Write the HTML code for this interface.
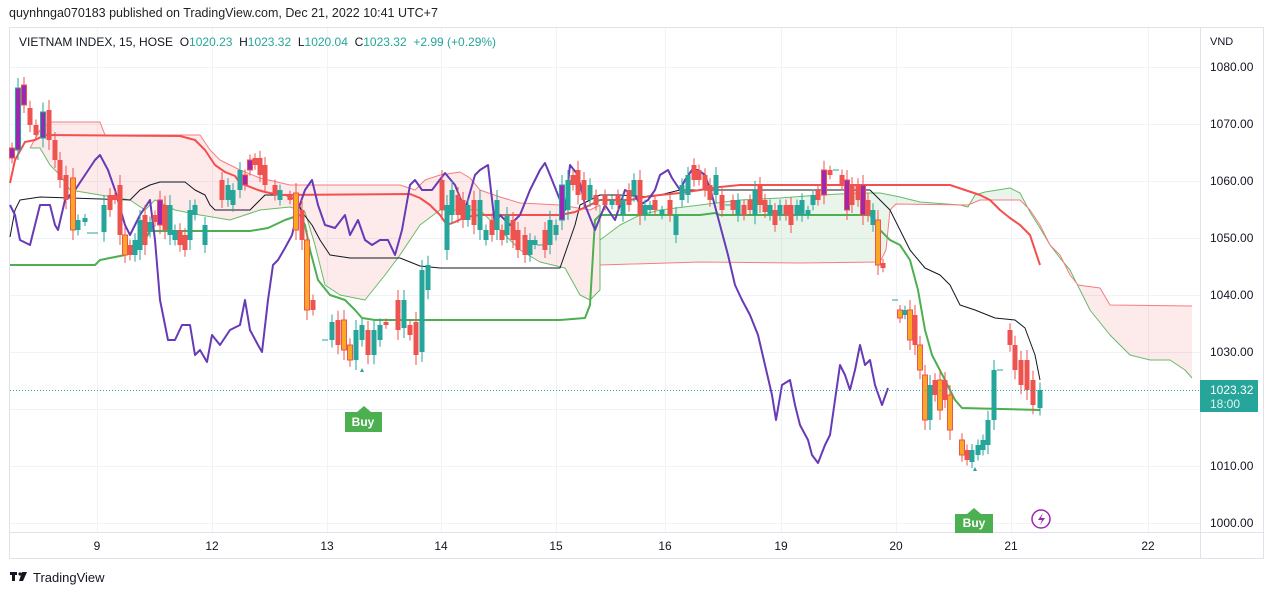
<!DOCTYPE html>
<html><head><meta charset="utf-8"><style>
body{margin:0;background:#fff;font-family:"Liberation Sans",sans-serif;}
.wrap{position:relative;width:1274px;height:595px;overflow:hidden}
.t{position:absolute;font-size:12px;color:#131722}
</style></head><body><div class="wrap">
<div class="t" style="left:9px;top:6px;font-size:12.5px;color:#222">quynhnga070183 published on TradingView.com, Dec 21, 2022 10:41 UTC+7</div>
<svg width="1274" height="595" style="position:absolute;left:0;top:0" id="s">
<rect x="9.5" y="27.5" width="1254" height="531" fill="none" stroke="#e0e3eb"/>
<line x1="1200.5" y1="28" x2="1200.5" y2="558" stroke="#e0e3eb"/>
<line x1="10" y1="532.5" x2="1263" y2="532.5" stroke="#e0e3eb"/>
<g stroke="#f0f3fa" id="grid"></g>
<g id="cloud"></g>
<g id="lines" fill="none"></g>
<g id="cd"></g>
<line x1="10" y1="390.5" x2="1200" y2="390.5" stroke="#26a69a" stroke-dasharray="1,2"/>
<rect x="1200" y="380" width="58" height="32" fill="#26a69a"/>
<text x="1210" y="394" fill="#fff" font-size="12" font-family="Liberation Sans">1023.32</text>
<text x="1210" y="408" fill="#e0f2f1" font-size="12" font-family="Liberation Sans">18:00</text>
<text x="1210" y="45" fill="#131722" font-size="11" font-family="Liberation Sans">VND</text>
<g font-size="12" font-family="Liberation Sans" fill="#131722" id="py"></g>
<g font-size="12" font-family="Liberation Sans" fill="#131722" text-anchor="middle">
<text x="97" y="550">9</text><text x="212" y="550">12</text><text x="327" y="550">13</text><text x="441" y="550">14</text><text x="556" y="550">15</text><text x="665" y="550">16</text><text x="781" y="550">19</text><text x="896" y="550">20</text><text x="1011" y="550">21</text><text x="1148" y="550">22</text></g>
<path d="M345 412h12l7-6 7 6h11v20h-37z" fill="#4caf50"/>
<text x="363" y="426" fill="#fff" font-size="12" font-weight="bold" text-anchor="middle" font-family="Liberation Sans">Buy</text>
<path d="M955 514h12l7-6 7 6h12v19h-38z" fill="#4caf50"/>
<text x="974" y="527" fill="#fff" font-size="12" font-weight="bold" text-anchor="middle" font-family="Liberation Sans">Buy</text>
<circle cx="1041" cy="519" r="9" fill="none" stroke="#9c27b0" stroke-width="1.5"/>
<path d="M1043 513l-5 7h4l-2 5 5-7h-4z" fill="#9c27b0"/>
<path d="M362 368l2 4h-4z M975 467l2 4h-4z" fill="#26a69a"/>
<rect x="10" y="572" width="7" height="3" fill="#131722"/><rect x="12" y="572" width="3" height="9" fill="#131722"/><circle cx="20" cy="574" r="1.6" fill="#131722"/><path d="M22 572h5l-4 9h-4z" fill="#131722"/>
<text x="33" y="582" font-size="13" fill="#131722" font-family="Liberation Sans">TradingView</text>
</svg>
<div class="t" style="left:19px;top:35px;font-size:12px;color:#131722">VIETNAM INDEX, 15, HOSE&nbsp; O<span style="color:#26a69a">1020.23</span>&nbsp; H<span style="color:#26a69a">1023.32</span>&nbsp; L<span style="color:#26a69a">1020.04</span>&nbsp; C<span style="color:#26a69a">1023.32</span>&nbsp; <span style="color:#26a69a">+2.99 (+0.29%)</span></div>
<script>
var NS="http://www.w3.org/2000/svg";
function el(p,t,a){var e=document.createElementNS(NS,t);for(var k in a)e.setAttribute(k,a[k]);document.getElementById(p).appendChild(e);return e}
[97,212,327,441,556,665,781,896,1011,1148].forEach(function(x){el("grid","line",{x1:x+.5,y1:28,x2:x+.5,y2:532})});
var pr=[1080,1070,1060,1050,1040,1030,1020,1010,1000];
pr.forEach(function(p,i){var y=67+i*57;el("grid","line",{x1:10,y1:y+.5,x2:1200,y2:y+.5});if(p!=1020){var t=el("py","text",{x:1210,y:y+4});t.textContent=p.toFixed(2)}});
function pts(a){var s="";for(var i=0;i<a.length;i+=2)s+=a[i]+","+a[i+1]+" ";return s}
function poly(g,a,c,w){el(g,"polyline",{points:pts(a),stroke:c,"stroke-width":w,fill:"none","stroke-linejoin":"round"})}
function area(top,bot,fill){var a=top.slice();for(var i=bot.length-2;i>=0;i-=2){a.push(bot[i],bot[i+1])}el("cloud","polygon",{points:pts(a),fill:fill})}
var rTop=[30,148,40,130,50,122,100,122,105,135,200,135,210,150,220,160,240,170,260,178,290,185,400,185,415,190,425,180,440,175,460,172,470,178,480,190,500,197,520,203,560,205,590,210,600,205];
var gBot=[30,148,40,148,50,165,60,175,70,190,100,195,130,200,145,210,155,200,175,210,200,215,230,220,260,210,290,207,305,212,315,245,325,285,340,295,365,300,385,275,400,255,410,240,420,225,440,210,460,210,480,210,500,230,520,250,540,262,565,268,580,295,590,300,600,290,600,205];
area(rTop,gBot,"rgba(239,83,80,0.12)");
var gA=[600,240,620,225,640,215,660,210,700,205,740,200,780,198,820,195,860,193,880,193,900,197,920,202,960,205,968,207];
var gB=[968,207,975,195,985,192,1010,188,1020,193,1030,212];
var gC=[1030,212,1040,228,1050,245,1060,258,1070,270,1080,290,1090,310,1110,335,1130,355,1150,360,1170,360,1185,370,1192,378];
var rA=[600,265,700,262,800,263,880,262,886,250,890,210,896,204,968,205];
var rB=[968,205,980,200,1020,200,1030,210];
var rC=[1030,210,1040,225,1050,245,1060,255,1070,275,1078,285,1100,288,1110,305,1192,306];
area(gA,rA,"rgba(76,175,80,0.12)");
area(gB,rB,"rgba(76,175,80,0.12)");
area(rC,gC,"rgba(239,83,80,0.12)");
poly("lines",rTop,"#f77c80",1);poly("lines",gBot,"#66bb6a",1);
poly("lines",gA.concat(gB,gC),"#66bb6a",1);poly("lines",rA.concat(rB,rC),"#f77c80",1);
poly("lines",[10,237,15,210,20,200,40,197,130,200,140,190,150,185,160,182,185,182,195,190,205,195,210,205,215,210,250,210,260,200,265,195,285,195,297,200,302,212,312,225,320,240,330,255,350,258,400,258,410,262,420,266,440,268,560,268,575,225,580,205,590,200,600,195,620,195,650,197,660,195,680,190,870,190,880,200,890,210,900,230,910,250,925,268,940,275,950,285,960,305,975,310,995,318,1015,320,1025,328,1035,355,1040,380],"#131722",1);
poly("lines",[10,265,95,265,100,260,125,255,145,240,150,231,250,231,268,228,285,220,300,215,305,225,310,250,318,280,330,295,345,300,355,310,362,318,375,320,560,320,585,318,590,305,595,220,600,215,700,215,715,213,720,215,870,215,880,230,890,240,900,245,910,260,918,290,925,330,932,355,945,380,955,400,962,408,1040,410],"#4caf50",2);
poly("lines",[10,183,15,160,25,142,35,140,45,135,180,136,195,140,205,150,215,165,225,172,235,176,240,183,258,190,265,192,280,195,410,194,420,198,430,205,440,215,447,225,455,222,465,217,480,215,560,215,575,212,590,205,600,200,630,200,650,196,680,193,700,190,720,187,740,185,950,185,965,190,980,195,990,200,1000,210,1010,218,1020,225,1030,235,1040,265],"#f44f4f",2);
poly("lines",[10,205,15,215,20,240,30,245,40,205,50,205,55,225,58,230,65,200,75,190,85,175,95,160,100,155,108,170,115,190,125,225,130,235,140,215,150,200,155,240,160,300,168,340,175,340,182,325,190,325,195,355,200,350,207,362,212,335,220,345,230,330,240,325,245,300,250,330,258,345,262,352,268,300,273,265,278,260,285,248,292,235,298,210,305,190,312,180,318,205,325,225,335,228,345,215,350,235,358,220,365,240,372,245,380,240,388,240,395,255,402,230,410,185,415,180,422,190,432,190,445,173,455,185,465,210,475,175,480,170,488,165,495,225,500,215,510,225,520,215,530,190,540,170,545,163,550,175,560,200,565,210,570,165,578,175,585,205,595,230,605,205,615,220,625,190,635,195,640,205,648,200,655,190,660,175,668,170,672,178,680,190,685,180,692,170,698,170,705,175,712,195,720,225,728,255,735,285,742,300,750,315,758,335,765,365,772,395,776,420,782,385,790,380,795,405,800,425,808,440,812,455,818,463,825,445,830,435,835,400,840,365,845,375,850,390,855,370,860,345,865,365,870,360,875,385,882,405,888,388],"#673ab7",2);
var C={t:["#26a69a","#26a69a"],r:["#ef5350","#ef5350"],p:["#9c27b0","#ef5350"],q:["#9c27b0","#26a69a"],o:["#f9a825","#ef5350"]};
var cs="12,148,158,p;18,88,150,q;24,85,105,p;30,108,125,r;36,125,135,r;43,112,138,q;49,110,140,r;55,140,160,r;60,160,180,r;66,175,200,r;73,178,230,o;78,220,230,t;85,218,222,t;104,205,232,t;110,195,210,r;115,195,200,r;120,185,235,r;125,235,255,o;130,245,255,r;135,240,255,t;140,220,250,t;145,215,245,r;150,222,232,t;155,215,222,r;160,200,225,p;165,205,230,r;170,205,235,t;175,230,240,t;180,230,245,r;185,235,250,r;190,210,240,t;195,205,215,t;205,225,245,t;222,180,200,r;228,185,200,t;233,190,205,t;240,170,190,t;245,175,185,p;250,160,170,p;255,158,165,r;260,158,175,r;265,165,185,r;275,185,195,r;280,190,200,t;290,195,200,r;296,193,230,o;302,210,240,r;307,240,310,o;313,300,310,r;332,322,340,t;338,320,345,r;344,320,350,o;350,345,360,o;356,330,360,t;362,325,340,t;368,330,355,r;374,330,355,t;380,325,340,t;386,322,325,r;398,300,330,r;404,300,328,t;410,325,335,r;416,322,355,r;422,270,352,t;428,265,290,t;442,180,210,r;447,205,250,t;452,190,215,t;458,195,215,r;463,200,220,r;468,205,220,t;474,200,225,r;480,200,230,t;486,230,240,t;492,220,235,r;497,200,230,t;502,230,240,r;507,215,235,t;513,220,240,r;518,230,250,r;525,235,255,r;530,240,255,t;535,240,245,t;545,230,250,r;550,220,245,t;556,225,235,t;562,185,220,q;568,180,210,t;573,175,185,r;578,170,195,r;584,180,200,r;590,185,200,t;596,195,205,r;605,195,205,r;612,200,205,t;618,195,205,r;623,200,215,t;629,190,205,r;634,180,195,t;640,180,215,r;645,205,215,t;650,205,210,t;655,200,210,r;662,210,215,t;670,200,215,r;676,215,235,t;682,185,200,t;688,175,195,t;694,165,180,r;699,170,180,r;705,175,190,r;710,185,200,r;716,175,195,t;722,195,210,r;733,200,210,r;738,200,215,t;744,205,215,r;750,200,210,r;755,190,215,t;760,185,205,r;765,200,212,r;770,205,215,t;775,210,225,r;780,205,215,t;786,205,215,r;791,205,225,r;797,205,215,t;802,200,215,t;808,210,215,t;813,195,205,t;818,190,200,r;824,170,195,p;830,170,175,r;842,175,185,r;847,180,210,p;852,185,205,r;858,185,200,r;863,185,215,p;868,200,215,r;873,210,225,t;878,220,265,o;883,263,268,r;900,310,318,o;905,310,315,t;910,310,340,o;915,315,345,r;920,345,370,o;925,375,420,o;930,385,420,t;935,380,395,r;940,380,410,o;945,380,400,r;950,395,430,o;962,440,455,o;967,450,460,r;972,450,462,t;978,445,455,t;983,440,450,t;988,420,445,t;994,370,420,t;1010,330,345,r;1015,345,370,r;1021,360,385,r;1027,360,390,r;1033,380,405,r;1040,390,408,t";
cs.split(";").forEach(function(s){var a=s.split(","),x=+a[0],t=+a[1],b=+a[2],c=C[a[3]];var h=b-t;var ext=Math.min(10,3+h*0.25);
el("cd","line",{x1:x,y1:t-ext,x2:x,y2:b+ext,stroke:c[1],"stroke-width":1});
el("cd","rect",{x:x-2.5,y:t,width:5,height:Math.max(1.5,h),fill:c[0],stroke:c[1],"stroke-width":c[0]==c[1]?0:1});});
[[95,233],[90,233],[325,340],[1000,370],[895,300],[540,245],[600,200],[728,205],[836,170]].forEach(function(p){el("cd","line",{x1:p[0]-3,y1:p[1],x2:p[0]+3,y2:p[1],stroke:"#26a69a"})});
</script>
</div></body></html>
